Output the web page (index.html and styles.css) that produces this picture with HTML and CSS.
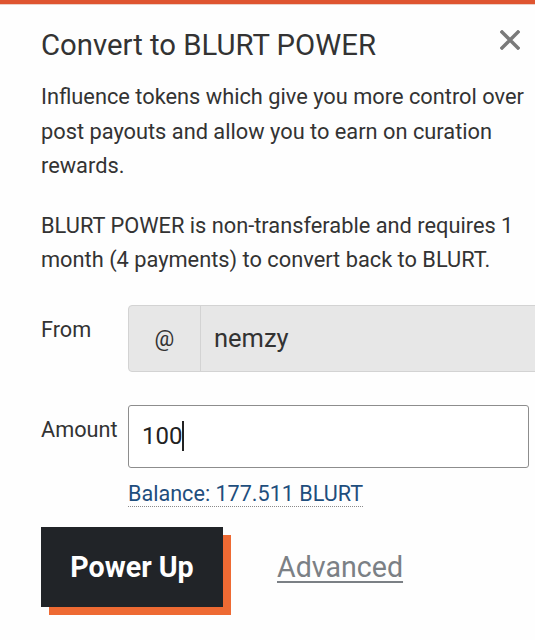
FILE: index.html
```html
<!DOCTYPE html>
<html lang="en">
<head>
  <meta charset="UTF-8" />
  <meta name="viewport" content="width=device-width, initial-scale=1" />
  <title>Convert to BLURT POWER</title>
  <link rel="stylesheet" href="styles.css">
</head>
<body>

  <div class="topbar"></div>

  <div class="modal">
    <div class="modal-head">
      <h2>Convert to BLURT POWER</h2>
      <svg class="close" width="20" height="20" viewBox="0 0 20 20">
        <path d="M2 2 L18 18 M18 2 L2 18" stroke="#7a7a7a" stroke-width="3.4" stroke-linecap="square" />
      </svg>
    </div>

    <p>Influence tokens which give you more control over post payouts and allow you to earn on curation rewards.</p>
    <p>BLURT POWER is non-transferable and requires 1 month (4 payments) to convert back to BLURT.</p>

    <form class="power-form" onsubmit="event.preventDefault()">
      <div class="row">
        <label>From</label>
        <div class="input-group">
          <span class="addon">@</span>
          <input type="text" value="nemzy" disabled />
        </div>
      </div>

      <div class="row amount-row">
        <label>Amount</label>
        <div class="field">
          <div class="amount">100<span class="caret"></span></div>
          <a class="balance" href="#">Balance: 177.511 BLURT</a>
        </div>
      </div>

      <div class="actions">
        <button type="submit">Power Up</button>
        <a class="advanced" href="#">Advanced</a>
      </div>
    </form>
  </div>

</body>
</html>
```

FILE: styles.css
```css
body {
  margin: 0;
  font-family: Roboto, 'Liberation Sans', sans-serif;
  background: #fefefe;
  color: #333;
  overflow-x: hidden;
}

.topbar {
  height: 4px;
  background: #df5530;
  border-bottom: 1px solid #ecd0c6;
}

.modal {
  padding: 0 0 40px 41px;
}

.modal-head {
  display: flex;
  justify-content: space-between;
  align-items: flex-start;
  padding-top: 20px;
}

h2 {
  margin: 0;
  font-size: 29.3px;
  font-weight: 400;
  line-height: 40px;
  color: #333;
}

.close {
  margin: 5px 15px 0 0;
}

p {
  margin: 15px 10px 25px 0;
  font-size: 21.8px;
  line-height: 34.5px;
}

.power-form {
  padding-top: 2px;
}

.row {
  display: flex;
  align-items: flex-start;
  margin-bottom: 33px;
}

label {
  flex: none;
  width: 87px;
  font-size: 21.7px;
  line-height: 34px;
  padding-top: 8px;
}

.input-group {
  flex: 1;
  min-width: 0;
  display: flex;
  height: 65px;
  border: 1px solid #d3d3d3;
  border-radius: 4px 0 0 4px;
  background: #e7e7e7;
  margin-right: -8px;
}

.addon {
  flex: none;
  width: 71px;
  border-right: 1px solid #d3d3d3;
  display: flex;
  align-items: center;
  justify-content: center;
  font-size: 22px;
  color: #333;
}

.input-group input {
  flex: 1;
  min-width: 0;
  border: none;
  background: transparent;
  font-family: inherit;
  font-size: 25.5px;
  color: #333;
  padding: 0 13px;
}

.amount-row {
  margin-bottom: 20px;
}

.field {
  flex: 1;
  margin-right: 6px;
}

.amount {
  height: 61px;
  border: 1px solid #8d8d8d;
  border-radius: 3px;
  display: flex;
  align-items: center;
  padding: 0 13px;
  font-size: 24px;
  color: #222;
  background: #fff;
}

.caret {
  display: inline-block;
  width: 2px;
  height: 30px;
  background: #222;
}

.balance {
  display: inline-block;
  margin-top: 14px;
  font-size: 21.6px;
  color: #1f4e7d;
  text-decoration: none;
  border-bottom: 1px dotted #8a8a8a;
  line-height: 24px;
}

.actions {
  display: flex;
  align-items: center;
}

button {
  width: 182px;
  height: 80px;
  background: #212428;
  color: #fff;
  border: none;
  font-family: inherit;
  font-size: 28.6px;
  font-weight: 700;
  box-shadow: 8px 8px 0 #ee6a33;
  cursor: pointer;
}

.advanced {
  margin-left: 54px;
  font-size: 28.6px;
  color: #7b8085;
  text-decoration: underline;
  text-underline-offset: 4px;
}
```
